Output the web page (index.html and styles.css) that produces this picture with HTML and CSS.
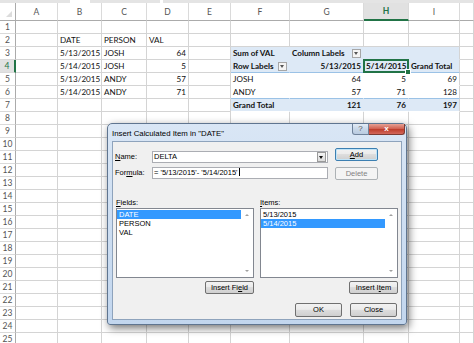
FILE: index.html
```html
<!DOCTYPE html>
<html lang="en">
<head>
    <meta charset="UTF-8">
    <meta name="viewport" content="width=device-width, initial-scale=1.0">
    <title>Insert Calculated Item</title>
    <link rel="stylesheet" href="styles.css">
</head>
<body>
    <div class="topstrip">
        <span class="seg seg-1"></span>
        <span class="seg seg-2"></span>
        <span class="seg seg-3"></span>
    </div>

    <table class="sheet">
        <colgroup>
            <col class="w-hdr"><col class="w-a"><col class="w-b"><col class="w-c"><col class="w-d"><col class="w-e">
            <col class="w-f"><col class="w-g"><col class="w-h"><col class="w-i"><col class="w-j">
        </colgroup>
        <thead>
            <tr>
                <th class="corner"></th>
                <th>A</th><th>B</th><th>C</th><th>D</th><th>E</th><th>F</th><th>G</th>
                <th class="colsel">H</th><th>I</th><th></th>
            </tr>
        </thead>
        <tbody>
            <tr><th>1</th><td></td><td></td><td></td><td></td><td></td><td></td><td></td><td></td><td></td><td></td></tr>
            <tr><th>2</th><td></td><td>DATE</td><td>PERSON</td><td>VAL</td><td></td><td></td><td></td><td></td><td></td><td></td></tr>
            <tr>
                <th>3</th><td></td><td class="n">5/13/2015</td><td>JOSH</td><td class="n">64</td><td></td>
                <td class="pv pv-hd b">Sum of VAL</td>
                <td class="pv pv-hd b">Column Labels <span class="dd"></span></td>
                <td class="pv pv-hd"></td>
                <td class="pv pv-hd"></td>
                <td></td>
            </tr>
            <tr>
                <th class="rowsel">4</th><td></td><td class="n">5/14/2015</td><td>JOSH</td><td class="n">5</td><td></td>
                <td class="pv pv-hd pv-line b">Row Labels <span class="dd"></span></td>
                <td class="pv pv-hd pv-line b n">5/13/2015</td>
                <td class="pv pv-hd pv-line b n sel">5/14/2015</td>
                <td class="pv pv-hd pv-line b">Grand Total</td>
                <td></td>
            </tr>
            <tr>
                <th>5</th><td></td><td class="n">5/13/2015</td><td>ANDY</td><td class="n">57</td><td></td>
                <td class="pv">JOSH</td><td class="pv n">64</td><td class="pv n">5</td><td class="pv n">69</td>
                <td></td>
            </tr>
            <tr>
                <th>6</th><td></td><td class="n">5/14/2015</td><td>ANDY</td><td class="n">71</td><td></td>
                <td class="pv pv-line">ANDY</td><td class="pv pv-line n">57</td><td class="pv pv-line n">71</td><td class="pv pv-line n">128</td>
                <td></td>
            </tr>
            <tr>
                <th>7</th><td></td><td></td><td></td><td></td><td></td>
                <td class="pv pv-total b">Grand Total</td><td class="pv pv-total b n">121</td><td class="pv pv-total b n">76</td><td class="pv pv-total b n">197</td>
                <td></td>
            </tr>
            <tr><th>8</th><td></td><td></td><td></td><td></td><td></td><td></td><td></td><td></td><td></td><td></td></tr>
            <tr><th>9</th><td></td><td></td><td></td><td></td><td></td><td></td><td></td><td></td><td></td><td></td></tr>
            <tr><th>10</th><td></td><td></td><td></td><td></td><td></td><td></td><td></td><td></td><td></td><td></td></tr>
            <tr><th>11</th><td></td><td></td><td></td><td></td><td></td><td></td><td></td><td></td><td></td><td></td></tr>
            <tr><th>12</th><td></td><td></td><td></td><td></td><td></td><td></td><td></td><td></td><td></td><td></td></tr>
            <tr><th>13</th><td></td><td></td><td></td><td></td><td></td><td></td><td></td><td></td><td></td><td></td></tr>
            <tr><th>14</th><td></td><td></td><td></td><td></td><td></td><td></td><td></td><td></td><td></td><td></td></tr>
            <tr><th>15</th><td></td><td></td><td></td><td></td><td></td><td></td><td></td><td></td><td></td><td></td></tr>
            <tr><th>16</th><td></td><td></td><td></td><td></td><td></td><td></td><td></td><td></td><td></td><td></td></tr>
            <tr><th>17</th><td></td><td></td><td></td><td></td><td></td><td></td><td></td><td></td><td></td><td></td></tr>
            <tr><th>18</th><td></td><td></td><td></td><td></td><td></td><td></td><td></td><td></td><td></td><td></td></tr>
            <tr><th>19</th><td></td><td></td><td></td><td></td><td></td><td></td><td></td><td></td><td></td><td></td></tr>
            <tr><th>20</th><td></td><td></td><td></td><td></td><td></td><td></td><td></td><td></td><td></td><td></td></tr>
            <tr><th>21</th><td></td><td></td><td></td><td></td><td></td><td></td><td></td><td></td><td></td><td></td></tr>
            <tr><th>22</th><td></td><td></td><td></td><td></td><td></td><td></td><td></td><td></td><td></td><td></td></tr>
            <tr><th>23</th><td></td><td></td><td></td><td></td><td></td><td></td><td></td><td></td><td></td><td></td></tr>
            <tr><th>24</th><td></td><td></td><td></td><td></td><td></td><td></td><td></td><td></td><td></td><td></td></tr>
            <tr><th>25</th><td></td><td></td><td></td><td></td><td></td><td></td><td></td><td></td><td></td><td></td></tr>
        </tbody>
    </table>

    <!-- janela do dialogo por cima da planilha -->
    <div class="dialog">
        <div class="dlg-title">
            <span class="dlg-caption">Insert Calculated Item in "DATE"</span>
            <div class="caption-btns">
                <span class="cap-help">?</span>
                <span class="cap-close">x</span>
            </div>
        </div>
        <div class="dlg-client">
            <div class="dlg-top">
                <label class="lbl lbl-name"><u>N</u>ame:</label>
                <div class="textbox combo">DELTA<span class="combo-btn"></span></div>
                <button class="btn btn-default"><u>A</u>dd</button>
                <label class="lbl">For<u>m</u>ula:</label>
                <div class="textbox">= '5/13/2015'- '5/14/2015'<span class="caret"></span></div>
                <button class="btn btn-disabled">Delete</button>
            </div>

            <div class="dlg-lists">
                <div class="list-col">
                    <label class="lbl lbl-list"><u>F</u>ields:</label>
                    <div class="listbox">
                        <div class="list-items">
                            <div class="item selected">DATE</div>
                            <div class="item">PERSON</div>
                            <div class="item">VAL</div>
                        </div>
                        <div class="list-scroll"><span class="arr-up"></span><span class="arr-down"></span></div>
                    </div>
                    <button class="btn btn-insert">Insert Fi<u>e</u>ld</button>
                </div>
                <div class="list-col">
                    <label class="lbl lbl-list"><u>I</u>tems:</label>
                    <div class="listbox">
                        <div class="list-items">
                            <div class="item">5/13/2015</div>
                            <div class="item selected">5/14/2015</div>
                        </div>
                        <div class="list-scroll"><span class="arr-up"></span><span class="arr-down"></span></div>
                    </div>
                    <button class="btn btn-insert">Insert I<u>t</u>em</button>
                </div>
            </div>

            <div class="dlg-foot">
                <button class="btn btn-wide">OK</button>
                <button class="btn btn-wide">Close</button>
            </div>
        </div>
    </div>
</body>
</html>
```
FILE: styles.css
```css
body {
    margin: 0;
    width: 474px;
    height: 343px;
    overflow: hidden;
    position: relative;
    background: #fff;
    font-family: Lato, "Liberation Sans", sans-serif;
}
.topstrip {
    display: flex;
    height: 3px;
}
.seg {
    background: #e4e4e4;
    height: 3px;
}
.seg-1 { width: 70px; margin-right: 20px; }
.seg-2 { width: 70px; margin-right: 3px; }
.seg-3 { flex: 1; }

/* planilha */
.sheet {
    border-collapse: separate;
    border-spacing: 0;
    table-layout: fixed;
    width: 474px;
    font-size: 8.1px;
}
.w-hdr { width: 16px; }
.w-a { width: 42px; }
.w-b { width: 44px; }
.w-c { width: 45px; }
.w-d { width: 42px; }
.w-e { width: 42px; }
.w-f { width: 59px; }
.w-g { width: 74px; }
.w-h { width: 45px; }
.w-i { width: 51px; }
.w-j { width: 14px; }
.sheet thead tr {
    height: 18px;
}
.sheet thead th {
    font-weight: normal;
    font-size: 8.5px;
    color: #555;
    text-align: center;
    padding: 0;
    border-right: 1px solid #dadada;
    border-bottom: 1px solid #ababab;
}
.sheet th.corner {
    position: relative;
    border-right-color: #ababab;
}
.sheet th.corner::after {
    content: "";
    position: absolute;
    right: 3px;
    bottom: 3px;
    border-left: 6px solid transparent;
    border-bottom: 6px solid #dcdcdc;
}
.sheet th.colsel {
    background: #e1e1e1;
    color: #217346;
    font-weight: bold;
    border-bottom: 2px solid #217346;
}
.sheet tbody tr {
    height: 13px;
}
.sheet tbody th {
    font-weight: normal;
    font-size: 8.5px;
    color: #555;
    text-align: center;
    padding: 0;
    line-height: 12px;
    border-right: 1px solid #ababab;
    border-bottom: 1px solid #dadada;
}
.sheet tbody th.rowsel {
    background: #e1e1e1;
    color: #217346;
    border-right: 2px solid #217346;
}
.sheet td {
    padding: 0 2px;
    line-height: 12px;
    white-space: nowrap;
    color: #111;
    border-right: 1px solid #d4d4d4;
    border-bottom: 1px solid #d4d4d4;
}
.sheet td.n {
    text-align: right;
}
.sheet td.b {
    font-weight: bold;
}

/* tabela dinamica */
.sheet td.pv {
    background: #fff;
    border-right-color: #fff;
    border-bottom-color: #fff;
}
.sheet td.pv-hd {
    background: #dde9f6;
    border-right-color: #dde9f6;
    border-bottom-color: #dde9f6;
}
.sheet td.pv-line {
    border-bottom-color: #9bc2e6;
}
.sheet td.pv-total {
    background: #dde9f6;
    border-right-color: #dde9f6;
}
.sheet td:nth-child(10).pv {
    border-right-color: #d4d4d4;
}
.dd {
    float: right;
    position: relative;
    width: 7px;
    height: 7px;
    margin-top: 2px;
    border: 1px solid #a6a6a6;
    background: #f4f4f4;
}
.dd::after {
    content: "";
    position: absolute;
    left: 1px;
    top: 2px;
    border-left: 2.5px solid transparent;
    border-right: 2.5px solid transparent;
    border-top: 3px solid #555;
}
.sheet td.sel {
    position: relative;
}
.sheet td.sel::after {
    content: "";
    position: absolute;
    left: -1px;
    top: -1px;
    right: -1px;
    bottom: -1px;
    border: 2px solid #217346;
}
.sheet td.sel::before {
    content: "";
    position: absolute;
    right: -3px;
    bottom: -3px;
    width: 4px;
    height: 4px;
    background: #217346;
    border: 1px solid #fff;
    z-index: 1;
}

/* dialogo */
.dialog {
    position: absolute;
    left: 107px;
    top: 123px;
    width: 300px;
    height: 202px;
    box-sizing: border-box;
    display: flex;
    flex-direction: column;
    border: 1px solid #5f7590;
    border-radius: 5px 5px 3px 3px;
    background: linear-gradient(#d9e6f5, #c2d6ee);
    box-shadow: 2px 3px 8px rgba(0, 0, 0, 0.55);
    font-family: "Liberation Sans", Arial, sans-serif;
    font-size: 7.5px;
    color: #000;
}
.dlg-title {
    height: 17px;
    display: flex;
    align-items: flex-start;
}
.dlg-caption {
    padding: 4px 0 0 4px;
    line-height: 12px;
    font-size: 7.8px;
}
.caption-btns {
    margin-left: auto;
    margin-right: 1px;
    display: flex;
}
.cap-help,
.cap-close {
    height: 11px;
    line-height: 10px;
    text-align: center;
    border: 1px solid #6f829a;
    border-top: none;
    box-sizing: border-box;
}
.cap-help {
    width: 17px;
    color: #555;
    font-size: 8px;
    border-radius: 0 0 0 3px;
    background: linear-gradient(#e3ecf6, #c8d7e8 50%, #b9cbe0);
}
.cap-close {
    width: 36px;
    color: #fff;
    font-weight: bold;
    font-size: 8px;
    border-left: none;
    border-color: #7d3a32;
    border-radius: 0 0 3px 0;
    background: linear-gradient(#e6a195, #cf5c4c 50%, #bc3b2a 51%, #d3675a);
}
.dlg-client {
    flex: 1;
    margin: 0 4px 4px;
    border: 1px solid #8ea3bc;
    background: #f0f0f0;
    padding-left: 2px;
}
.dlg-top {
    display: grid;
    grid-template-columns: 37px 176px 50px;
    grid-template-rows: 13px 13px;
    column-gap: 0;
    row-gap: 6px;
    margin-top: 6px;
}
.dlg-top .btn {
    margin-left: 7px;
}
.lbl {
    line-height: 12px;
}
.lbl-name {
    margin-top: 3px;
}
.textbox {
    height: 12px;
    box-sizing: border-box;
    border: 1px solid #abadb3;
    background: #fff;
    padding-left: 1px;
    line-height: 10px;
    white-space: nowrap;
    position: relative;
}
.combo {
    margin-top: 3px;
}
.combo-btn {
    position: absolute;
    right: 1px;
    top: 0;
    width: 7px;
    height: 8px;
    border: 1px solid #9a9a9a;
    background: linear-gradient(#f4f4f4, #dcdcdc);
}
.combo-btn::after {
    content: "";
    position: absolute;
    left: 1px;
    top: 3px;
    border-left: 2.5px solid transparent;
    border-right: 2.5px solid transparent;
    border-top: 3px solid #111;
}
.caret {
    display: inline-block;
    width: 1px;
    height: 8px;
    margin-left: 1px;
    vertical-align: -1px;
    background: #000;
}
.btn {
    font-family: inherit;
    font-size: 7.5px;
    color: #000;
    padding: 0;
    box-sizing: border-box;
    border: 1px solid #707070;
    border-radius: 2px;
    background: linear-gradient(#f2f2f2, #ebebeb 45%, #dddddd 50%, #cfcfcf);
    line-height: 10px;
}
.btn-default {
    border-color: #3c7fb1;
    box-shadow: inset 0 0 0 1px #c0e4f8;
}
.btn-disabled {
    border-color: #adb2b5;
    background: #f4f4f4;
    color: #838383;
}
.dlg-lists {
    display: flex;
    gap: 6px;
    margin: 18px 0 0 1px;
}
.list-col {
    width: 138px;
    display: flex;
    flex-direction: column;
}
.lbl-list {
    line-height: 10px;
}
.listbox {
    height: 70px;
    box-sizing: border-box;
    border: 1px solid #828790;
    background: #fff;
    display: flex;
}
.list-items {
    flex: 1;
    padding-top: 1px;
}
.item {
    line-height: 9px;
    height: 9px;
    padding-left: 2px;
}
.item.selected {
    background: #3399ff;
    color: #fff;
}
.list-scroll {
    width: 12px;
    display: flex;
    flex-direction: column;
    justify-content: space-between;
    align-items: center;
    padding: 5px 0 5px;
}
.arr-up {
    border-left: 2.5px solid transparent;
    border-right: 2.5px solid transparent;
    border-bottom: 2.5px solid #a0a0a0;
}
.arr-down {
    border-left: 2.5px solid transparent;
    border-right: 2.5px solid transparent;
    border-top: 2.5px solid #a0a0a0;
}
.btn-insert {
    align-self: flex-end;
    width: 49px;
    height: 13px;
    margin-top: 3px;
}
.dlg-foot {
    display: flex;
    justify-content: flex-end;
    gap: 8px;
    margin-top: 9px;
    padding-right: 4px;
}
.btn-wide {
    width: 47px;
    height: 14px;
}
```
